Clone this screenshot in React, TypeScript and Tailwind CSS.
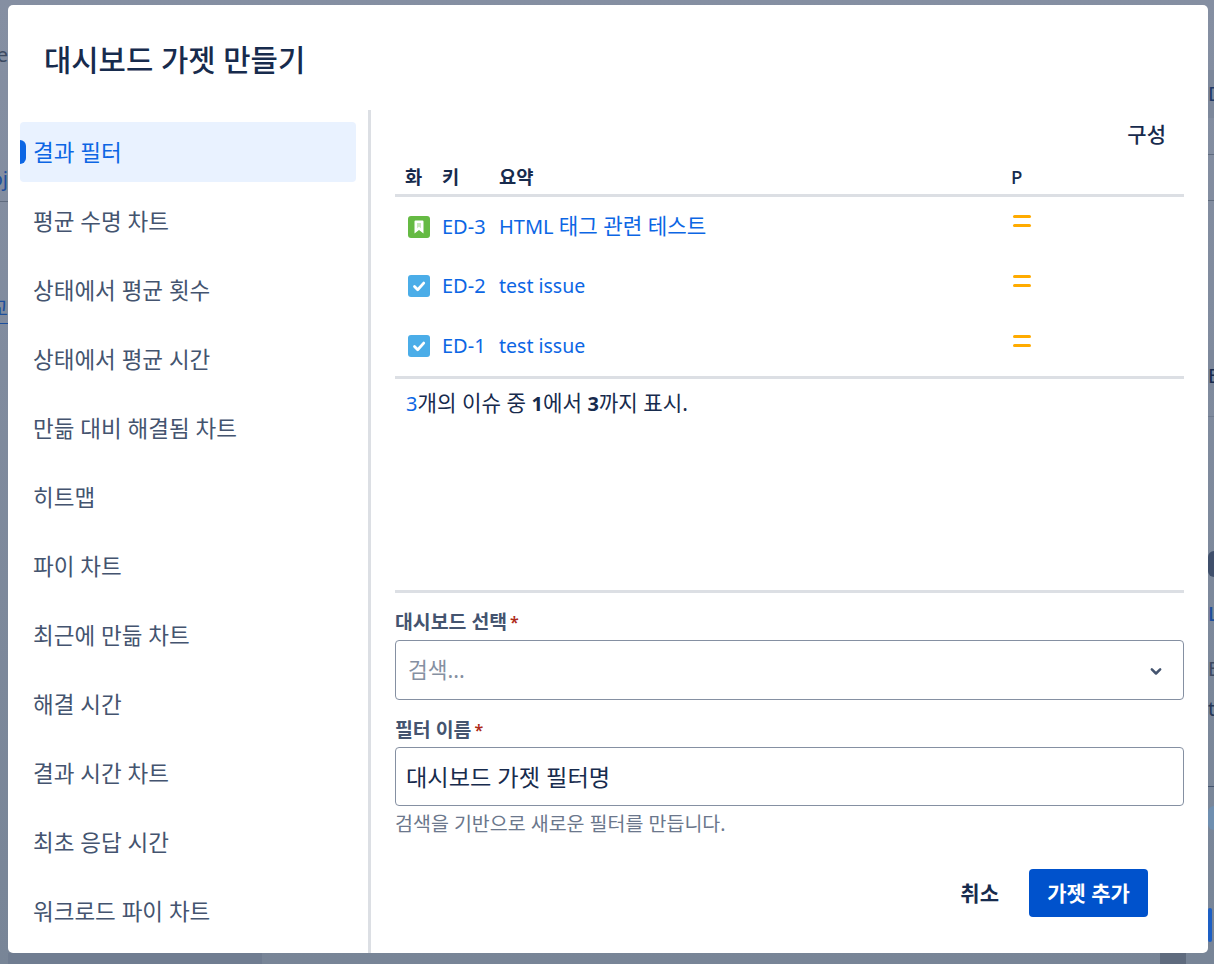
const FONT = "font-['Noto_Sans','Noto_Sans_CJK_KR',sans-serif]";

const NAV_ITEMS = [
  '결과 필터',
  '평균 수명 차트',
  '상태에서 평균 횟수',
  '상태에서 평균 시간',
  '만듦 대비 해결됨 차트',
  '히트맵',
  '파이 차트',
  '최근에 만듦 차트',
  '해결 시간',
  '결과 시간 차트',
  '최초 응답 시간',
  '워크로드 파이 차트',
];

const ISSUES = [
  { key: 'ED-3', summary: <>HTML <span className="text-[21.2px] leading-none">태그 관련 테스트</span></>, type: 'story' },
  { key: 'ED-2', summary: <span className="text-[19.5px]">test issue</span>, type: 'task' },
  { key: 'ED-1', summary: <span className="text-[19.5px]">test issue</span>, type: 'task' },
];

// bits of the page behind the overlay that show around the dialog
const LEFT_STRIP = [
  { cls: 'h-[41px]' },
  { cls: 'h-[28px] text-[#3c4a61]', text: 'e' },
  { cls: 'h-[87px] border-b border-[#5f6b7e]' },
  { cls: 'h-[46px] items-center border-b border-[#5f6b7e] text-[#1d4f9c]', text: 'oj' },
  { cls: 'h-[31px]' },
  { cls: 'h-[54px] border-b border-[#6f7b8f] bg-[#7d889b]' },
  { cls: 'h-[37px] items-end border-b border-[#1d4f9c] text-[#1d4f9c]', text: '교' },
  { cls: 'h-[67px] border-b border-[#6f7b8f]' },
  { cls: 'h-[104px] border-b-2 border-[#6f7b8f]' },
  { cls: 'h-[103px] border-b border-[#6f7b8f]' },
  { cls: 'h-[356px]' },
  { cls: 'h-[11px] bg-[#707d91]' },
];

const RIGHT_STRIP = [
  { cls: 'h-[70px]' },
  { cls: 'h-[48px] items-center bg-[#7d889b] text-[#1f3a68]', text: 'D' },
  { cls: 'h-[37px] border-b border-[#5f6b7e]' },
  { cls: 'h-[46px] border-b border-[#5f6b7e]' },
  { cls: 'h-[149px]' },
  { cls: 'h-[40px] items-end bg-[#7d889b] text-[#172b4d]', text: 'E' },
  { cls: 'h-[27px] border-b border-[#6f7b8f]' },
  { cls: 'h-[134px]' },
  { cls: 'h-[26px] rounded-l-full bg-[#3f4f6b]' },
  { cls: 'h-[23px]' },
  { cls: 'h-[28px] font-medium text-[#1d4f9c]', text: 'L' },
  { cls: 'h-[27px]' },
  { cls: 'h-[28px] text-[#3c4a61]', text: 'E' },
  { cls: 'h-[12px]' },
  { cls: 'h-[28px] text-[#253858]', text: 't' },
  { cls: 'h-[64px] border-b border-[#44546f]' },
  { cls: 'h-[19px]' },
  { cls: 'h-[24px] rounded-l-full bg-[#6f8fb0]' },
  { cls: 'h-[78px]' },
  { cls: 'h-[34px] w-[4px] rounded-sm bg-[#1d5fc4]' },
];

function Strip({ items, className }: { items: { cls: string; text?: string }[]; className: string }) {
  return (
    <div className={`flex shrink-0 flex-col overflow-hidden ${className}`}>
      {items.map((s, i) => (
        <div key={i} className={`flex shrink-0 overflow-hidden whitespace-nowrap text-[20px] leading-[28px] ${s.cls}`}>
          {s.text}
        </div>
      ))}
    </div>
  );
}

function TypeIcon({ type }: { type: string }) {
  if (type === 'story') {
    return (
      <svg width="22" height="22" viewBox="0 0 22 22" className="block">
        <rect x="0" y="0" width="22" height="22" rx="3" fill="#65ba43" />
        <path d="M6.5 5.5a1 1 0 0 1 1-1h7a1 1 0 0 1 1 1v12l-4.5-3.6-4.5 3.6z" fill="#fff" />
        <path d="M9 7h4v5.2l-2-1.5-2 1.5z" fill="#65ba43" opacity="0.35" />
      </svg>
    );
  }
  return (
    <svg width="22" height="22" viewBox="0 0 22 22" className="block">
      <rect x="0" y="0" width="22" height="22" rx="3" fill="#4bade8" />
      <path d="M6.5 11.5l3.2 3.2 6-6.6" fill="none" stroke="#fff" strokeWidth="2.8" strokeLinecap="round" strokeLinejoin="round" />
    </svg>
  );
}

function PriorityIcon() {
  return (
    <div className="ml-[2px] mt-[-9px] flex w-[18px] flex-col gap-[6px]">
      <div className="h-[3px] rounded-full bg-[#ffab00]" />
      <div className="h-[3px] rounded-full bg-[#ffab00]" />
    </div>
  );
}

export default function App() {
  return (
    <div className={`${FONT} flex h-[964px] overflow-hidden bg-gradient-to-b from-[#858fa2] to-[#788597]`}>
      <Strip items={LEFT_STRIP} className="w-[8px] items-end" />

      <div className="flex w-[1200px] shrink-0 flex-col pt-[5px]">
        <div className="flex h-[948px] flex-col overflow-hidden rounded-[5px] bg-white">
          <div className="flex h-[105px] shrink-0 items-center pl-[36px] pt-[5px] text-[29.7px] font-medium leading-none text-[#172b4d]">
            대시보드 가젯 만들기
          </div>

          <div className="flex min-h-0 flex-1">
            {/* Gadget list */}
            <div className="w-[363px] shrink-0 border-r-[3px] border-[#dcdfe4] pl-[12px] pr-[12px] pt-[12px]">
              <div className="flex flex-col gap-[9px]">
                {NAV_ITEMS.map((label, i) => (
                  <div
                    key={label}
                    className={`relative flex h-[60px] items-center rounded-[4px] pl-[13px] pt-[2px] text-[22.5px] leading-none ${
                      i === 0 ? 'bg-[#e9f2ff] text-[#0c66e4]' : 'text-[#44546f]'
                    }`}
                  >
                    {i === 0 && <span className="absolute left-0 top-[18px] h-[24px] w-[6px] rounded-r-full bg-[#0c66e4]" />}
                    {label}
                  </div>
                ))}
              </div>
            </div>

            {/* Preview and form */}
            <div className="flex min-w-0 flex-1 flex-col pl-[24px] pr-[24px]">
              <div className="flex h-[53px] items-center justify-end pb-[5px] pr-[18px] text-[21px] font-medium leading-none text-[#172b4d]">
                구성
              </div>

              <table className="w-full border-collapse text-[20px]">
                <thead>
                  <tr className="h-[32px] border-b-[3px] border-[#dcdfe4] text-left text-[18.7px] text-[#172b4d]">
                    <th className="w-[47px] pb-[2px] pl-[10px] font-semibold">화</th>
                    <th className="w-[57px] pb-[2px] font-semibold">키</th>
                    <th className="w-[512px] pb-[2px] font-semibold">요약</th>
                    <th className="pb-[2px] font-medium">P</th>
                  </tr>
                </thead>
                <tbody>
                  {ISSUES.map(r => (
                    <tr key={r.key} className="h-[60px] text-[#0c66e4]">
                      <td className="pl-[13px] pt-[2px]"><TypeIcon type={r.type} /></td>
                      <td className="pt-[2px]">{r.key}</td>
                      <td className="pt-[2px]">{r.summary}</td>
                      <td><PriorityIcon /></td>
                    </tr>
                  ))}
                </tbody>
              </table>

              <div className="mt-px h-[214px] border-t-[3px] border-[#dcdfe4] pl-[11px] pt-[9px] text-[21.2px] leading-[30px] text-[#172b4d]">
                <span className="text-[20px] text-[#0c66e4]">3</span>개의 이슈 중 <b className="text-[20px] font-bold">1</b>에서 <b className="text-[20px] font-bold">3</b>까지 표시.
              </div>

              <div className="border-t-[3px] border-[#dcdfe4] pt-[17px]">
                <div className="flex h-[24px] items-center gap-[3px] text-[19.4px] font-semibold text-[#44546f]">
                  대시보드 선택<span className="text-[16px] text-[#ae2a19]">*</span>
                </div>
                <div className="mt-[6px] flex h-[60px] items-center justify-between rounded-[4px] border border-[#8590a2] pl-[12px] pr-[17px] pt-px text-[21.5px] text-[#8590a2]">
                  검색...
                  <svg width="20" height="20" viewBox="0 0 24 24" className="text-[#44546f]">
                    <path d="M7 10l5 5 5-5" fill="none" stroke="currentColor" strokeWidth="3" strokeLinecap="round" strokeLinejoin="round" />
                  </svg>
                </div>
                <div className="mt-[9px] flex h-[38px] items-center gap-[3px] pt-[4px] text-[19.4px] font-semibold text-[#44546f]">
                  필터 이름<span className="text-[16px] text-[#ae2a19]">*</span>
                </div>
                <div className="flex h-[59px] items-center rounded-[4px] border border-[#8590a2] pl-[10px] pt-px text-[23.2px] text-[#172b4d]">
                  대시보드 가젯 필터명
                </div>
                <div className="mt-[6px] text-[19.5px] leading-[24px] text-[#6b778c]">검색을 기반으로 새로운 필터를 만듭니다.</div>
              </div>

              <div className="mt-[33px] flex items-center justify-end gap-[11px] pr-[36px]">
                <button className="h-[48px] px-[19px] pt-px text-[21px] font-semibold text-[#172b4d]">취소</button>
                <button className="h-[48px] w-[119px] rounded-[4px] bg-[#0052cc] pt-px text-[21px] font-semibold text-white">가젯 추가</button>
              </div>
            </div>
          </div>
        </div>

        <div className="flex h-[11px] shrink-0">
          <div className="w-[254px] bg-[#707d91]" />
          <div className="w-[898px]" />
          <div className="w-[26px] bg-[#5f6b7e]" />
        </div>
      </div>

      <Strip items={RIGHT_STRIP} className="w-[6px]" />
    </div>
  );
}
